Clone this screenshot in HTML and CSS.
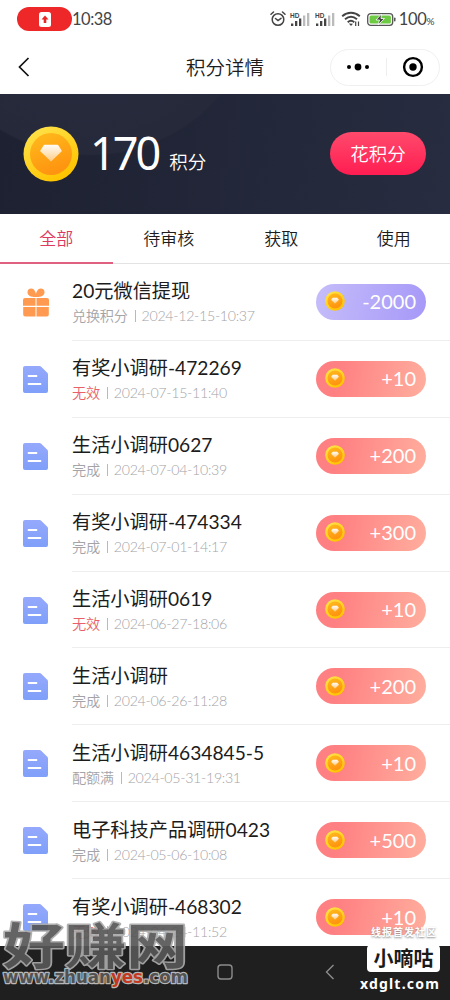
FILE: index.html
```html
<!DOCTYPE html>
<html lang="zh-CN">
<head>
  <meta charset="UTF-8" />
  <meta name="viewport" content="width=device-width, initial-scale=1.0" />
  <title>积分详情</title>
  <link rel="stylesheet" href="styles.css">
</head>
<body>

  <svg class="defs" width="0" height="0">
    <defs>
      <linearGradient id="coin-rim" x1="0" y1="0" x2="0.6" y2="1">
        <stop offset="0" stop-color="#ffe552" />
        <stop offset="1" stop-color="#ffc400" />
      </linearGradient>
      <linearGradient id="coin-face" x1="0" y1="0" x2="0.4" y2="1">
        <stop offset="0" stop-color="#ffbc1c" />
        <stop offset="1" stop-color="#ff9410" />
      </linearGradient>
      <linearGradient id="gem" x1="0" y1="0" x2="0" y2="1">
        <stop offset="0" stop-color="#fffaf2" />
        <stop offset="1" stop-color="#ffd08c" />
      </linearGradient>
      <linearGradient id="doc-fill" x1="0" y1="0" x2="0" y2="1">
        <stop offset="0" stop-color="#95a9fc" />
        <stop offset="1" stop-color="#7f9ff9" />
      </linearGradient>
    </defs>
    <symbol id="coin" viewBox="0 0 56 56">
      <circle cx="28" cy="28" r="27.5" fill="url(#coin-rim)" />
      <circle cx="28" cy="28" r="21" fill="url(#coin-face)" />
      <path d="M21.5 19.500h13l3.500 5.500L28 34.500 18 25z" fill="url(#gem)" stroke="url(#gem)" stroke-width="1.500" stroke-linejoin="round" />
    </symbol>
    <symbol id="doc" viewBox="0 0 25 27">
      <path d="M2 0h14.500q1 0 1.700.700l6.100 6.100q.700.700.700 1.700V25a2 2 0 0 1-2 2H2a2 2 0 0 1-2-2V2a2 2 0 0 1 2-2z" fill="url(#doc-fill)" />
      <path d="M5.500 10h8M5.500 18h12" stroke="#fff" stroke-width="1.800" stroke-linecap="round" />
    </symbol>
    <symbol id="gift" viewBox="0 0 26 29">
      <g fill="#ff9a50">
        <path d="M2 10h10.500v7.800H0V12a2 2 0 0 1 2-2zM13.500 10H24a2 2 0 0 1 2 2v5.800H13.500zM.200 19h12.300v9.500H2.200a2 2 0 0 1-2-2zM13.500 19h12.300v7.500a2 2 0 0 1-2 2H13.500z" />
        <path d="M12.500 9C8 9 4.500 7.500 4.500 4.200A3.800 3.800 0 0 1 8.300.500c2.800 0 4.700 3.500 4.700 6.500 0-3 1.900-6.500 4.700-6.500a3.800 3.800 0 0 1 3.800 3.700C21.500 7.500 18 9 13.500 9z" />
      </g>
    </symbol>
    <symbol id="signal" viewBox="0 0 21 15">
      <g fill="#444">
        <rect x="1" y="11.500" width="2.300" height="2.500" />
        <rect x="5" y="9" width="2.300" height="5" />
        <rect x="9" y="6.500" width="2.300" height="7.500" />
      </g>
      <rect x="13" y="3.500" width="2.300" height="10.500" fill="#bbb" />
      <rect x="17" y="1" width="2.300" height="13" fill="#bbb" />
      <text x="0" y="5.500" class="hd">HD</text>
    </symbol>
  </svg>

  <div class="status-bar">
    <span class="record">
      <svg width="12" height="15" viewBox="0 0 12 15">
        <rect width="12" height="15" rx="2.500" fill="#fff" />
        <path d="M6 3.500l3.500 4H7.300V11H4.700V7.500H2.500z" fill="#e82727" />
      </svg>
    </span>
    <span class="clock">10:38</span>
    <div class="status-icons">
      <svg class="alarm" width="16" height="16" viewBox="0 0 16 16" fill="none" stroke="#444" stroke-width="1.500" stroke-linecap="round">
        <circle cx="8" cy="8.500" r="5.800" />
        <path d="M5.500 7.500L8 9.600l3-2.300M1 3.300L3.500 1M15 3.300L12.500 1" />
      </svg>
      <svg width="21" height="15"><use href="#signal" /></svg>
      <svg class="second-signal" width="21" height="15"><use href="#signal" /></svg>
      <svg class="wifi" width="20" height="16" viewBox="0 0 20 16" fill="none" stroke="#444" stroke-width="1.900">
        <path d="M1.200 5.200C6.500.600 13.500.600 18.800 5.200M4 8.300c3.700-3.200 8.300-3.200 12 0M6.700 11.200c2-1.700 4.600-1.700 6.600 0" />
        <path d="M7.800 12.600L10 15l2-2.300z" fill="#444" stroke="none" />
        <path d="M14.700 10.500v4.500M17.500 10.500v4.500" stroke-width="1.200" />
      </svg>
      <svg class="battery" width="29" height="13" viewBox="0 0 29 13">
        <rect x=".700" y=".700" width="25" height="11.600" rx="3" fill="#fff" stroke="#555" stroke-width="1.300" />
        <rect x="2.500" y="2.500" width="21.400" height="8" rx="1.500" fill="#6cca43" />
        <path d="M14.500 1L9 7h3.500L11 12l6.500-6.500H14z" fill="#444" stroke="#fff" stroke-width=".800" />
        <rect x="27" y="4.500" width="1.500" height="4" rx=".700" fill="#555" />
      </svg>
      <span class="battery-level">100<small>%</small></span>
    </div>
  </div>

  <header class="nav-bar">
    <svg class="back" width="12" height="20" viewBox="0 0 12 20" fill="none" stroke="#111" stroke-width="1.700">
      <path d="M10.500 1L1.500 10l9 9" />
    </svg>
    <h1>积分详情</h1>
    <div class="capsule">
      <svg width="24" height="10" viewBox="0 0 24 10">
        <circle cx="3" cy="5" r="2" />
        <circle cx="12" cy="5" r="3.400" />
        <circle cx="21" cy="5" r="2" />
      </svg>
      <span class="capsule-line"></span>
      <svg width="22" height="22" viewBox="0 0 22 22">
        <circle cx="11" cy="11" r="8.900" fill="none" stroke="#000" stroke-width="2.400" />
        <circle cx="11" cy="11" r="3.700" />
      </svg>
    </div>
  </header>

  <section class="balance">
    <svg class="balance-coin" width="56" height="56"><use href="#coin" /></svg>
    <span class="balance-value">170</span>
    <span class="balance-unit">积分</span>
    <button class="spend-btn">花积分</button>
  </section>

  <nav class="tabs">
    <a class="tab active">全部</a>
    <a class="tab">待审核</a>
    <a class="tab">获取</a>
    <a class="tab">使用</a>
  </nav>

  <main class="records">
    <div class="record-row">
      <svg class="type-icon gift-icon" width="26" height="29"><use href="#gift" /></svg>
      <div class="record-body">
        <div class="record-text">
          <h2>20元微信提现</h2>
          <p>兑换积分<i></i>2024-12-15-10:37</p>
        </div>
        <div class="points minus"><svg width="20" height="20"><use href="#coin" /></svg>-2000</div>
      </div>
    </div>
    <div class="record-row">
      <svg class="type-icon" width="25" height="27"><use href="#doc" /></svg>
      <div class="record-body">
        <div class="record-text">
          <h2>有奖小调研-472269</h2>
          <p><span class="invalid">无效</span><i></i>2024-07-15-11:40</p>
        </div>
        <div class="points"><svg width="20" height="20"><use href="#coin" /></svg>+10</div>
      </div>
    </div>
    <div class="record-row">
      <svg class="type-icon" width="25" height="27"><use href="#doc" /></svg>
      <div class="record-body">
        <div class="record-text">
          <h2>生活小调研0627</h2>
          <p>完成<i></i>2024-07-04-10:39</p>
        </div>
        <div class="points"><svg width="20" height="20"><use href="#coin" /></svg>+200</div>
      </div>
    </div>
    <div class="record-row">
      <svg class="type-icon" width="25" height="27"><use href="#doc" /></svg>
      <div class="record-body">
        <div class="record-text">
          <h2>有奖小调研-474334</h2>
          <p>完成<i></i>2024-07-01-14:17</p>
        </div>
        <div class="points"><svg width="20" height="20"><use href="#coin" /></svg>+300</div>
      </div>
    </div>
    <div class="record-row">
      <svg class="type-icon" width="25" height="27"><use href="#doc" /></svg>
      <div class="record-body">
        <div class="record-text">
          <h2>生活小调研0619</h2>
          <p><span class="invalid">无效</span><i></i>2024-06-27-18:06</p>
        </div>
        <div class="points"><svg width="20" height="20"><use href="#coin" /></svg>+10</div>
      </div>
    </div>
    <div class="record-row">
      <svg class="type-icon" width="25" height="27"><use href="#doc" /></svg>
      <div class="record-body">
        <div class="record-text">
          <h2>生活小调研</h2>
          <p>完成<i></i>2024-06-26-11:28</p>
        </div>
        <div class="points"><svg width="20" height="20"><use href="#coin" /></svg>+200</div>
      </div>
    </div>
    <div class="record-row">
      <svg class="type-icon" width="25" height="27"><use href="#doc" /></svg>
      <div class="record-body">
        <div class="record-text">
          <h2>生活小调研4634845-5</h2>
          <p>配额满<i></i>2024-05-31-19:31</p>
        </div>
        <div class="points"><svg width="20" height="20"><use href="#coin" /></svg>+10</div>
      </div>
    </div>
    <div class="record-row">
      <svg class="type-icon" width="25" height="27"><use href="#doc" /></svg>
      <div class="record-body">
        <div class="record-text">
          <h2>电子科技产品调研0423</h2>
          <p>完成<i></i>2024-05-06-10:08</p>
        </div>
        <div class="points"><svg width="20" height="20"><use href="#coin" /></svg>+500</div>
      </div>
    </div>
    <div class="record-row">
      <svg class="type-icon" width="25" height="27"><use href="#doc" /></svg>
      <div class="record-body">
        <div class="record-text">
          <h2>有奖小调研-468302</h2>
          <p><span class="invalid">无效</span><i></i>2024-04-24-11:52</p>
        </div>
        <div class="points"><svg width="20" height="20"><use href="#coin" /></svg>+10</div>
      </div>
    </div>
  </main>

  <footer class="system-nav">
    <svg width="16" height="16" viewBox="0 0 16 16" fill="none" stroke="#8c8c8c" stroke-width="1.400">
      <rect x="1" y="1" width="14" height="14" rx="3" />
    </svg>
    <svg width="10" height="16" viewBox="0 0 10 16" fill="none" stroke="#8c8c8c" stroke-width="1.400">
      <path d="M8.500 1l-7 7 7 7" />
    </svg>
  </footer>

  <svg class="stamp-left" width="196" height="80" viewBox="0 0 196 80">
    <text class="stamp-name" x="3" y="57" textLength="185" lengthAdjust="spacingAndGlyphs" transform="scale(1 .83)">好赚网</text>
    <text class="stamp-url" x="3" y="66" textLength="185" lengthAdjust="spacingAndGlyphs">www.zhuan<tspan class="red">yes</tspan>.com</text>
  </svg>

  <div class="stamp-right">
    <span class="stamp-slogan">线报首发社区</span>
    <span class="stamp-badge">小嘀咕</span>
    <span class="stamp-site">xdglt.com</span>
  </div>

</body>
</html>
```
FILE: styles.css
```css
* {
  box-sizing: border-box;
}

body {
  margin: 0;
  position: relative;
  width: 450px;
  height: 1000px;
  overflow: hidden;
  display: flex;
  flex-direction: column;
  background: #fff;
  color: #1c1c1c;
  font-family: 'Noto Sans CJK SC', sans-serif;
  font-weight: 350;
}

svg {
  display: block;
  flex: none;
}

.defs {
  position: absolute;
}

/* status bar */
.status-bar {
  height: 40px;
  flex: none;
  display: flex;
  align-items: center;
  padding: 0 16px 2px 17px;
  color: #444;
  font-family: Lato, sans-serif;
  font-weight: 400;
}

.record {
  width: 55px;
  height: 24px;
  border-radius: 12px;
  background: #ee2729;
  display: flex;
  align-items: center;
  justify-content: center;
}

.clock {
  font-size: 16.500px;
  letter-spacing: -.5px;
}

.status-icons {
  margin-left: auto;
  display: flex;
  align-items: center;
}

.alarm {
  margin-right: 4px;
}

.second-signal {
  margin-left: 4px;
}

.wifi {
  margin: 0 6px 0 5px;
}

.battery {
  margin-right: 3px;
}

.battery-level {
  font-size: 16.500px;
  letter-spacing: -.4px;
}

.battery-level small {
  font-size: 10px;
}

.hd {
  font: bold 6.500px 'Liberation Sans', sans-serif;
  fill: #444;
}

/* title bar */
.nav-bar {
  height: 54px;
  flex: none;
  display: grid;
  grid-template-columns: 120px 1fr 120px;
  align-items: center;
  padding: 0 10px 0 18px;
}

.nav-bar h1 {
  margin: 0 8px 2px 0;
  text-align: center;
  font-size: 19.500px;
  font-weight: 350;
}

.capsule {
  width: 110px;
  height: 37px;
  margin-left: 10px;
  border: 1px solid #f0f0f0;
  border-radius: 19px;
  display: flex;
  align-items: center;
  justify-content: space-between;
  padding: 0 15px;
}

.capsule-line {
  width: 1px;
  height: 18px;
  background: #eee;
}

/* balance */
.balance {
  height: 120px;
  flex: none;
  display: flex;
  align-items: center;
  padding: 0 24px 1px 23px;
  color: #fff;
  background:
    radial-gradient(circle at 90px -110px, #292d3f 0, #25293a 170px, transparent 172px),
    linear-gradient(100deg, #1d2131, #272c40);
}

.balance-value {
  margin: 0 0 2px 11px;
  font-family: 'Noto Sans', sans-serif;
  font-size: 45px;
  line-height: 56px;
  letter-spacing: -3px;
  font-weight: 400;
}

.balance-unit {
  margin: 14px 0 0 11px;
  font-size: 18.500px;
}

.spend-btn {
  width: 96px;
  height: 43px;
  margin-left: auto;
  padding: 0 0 2px;
  border: 0;
  border-radius: 22px;
  background: linear-gradient(#ff4a6c, #ff1d51);
  color: #fff;
  font: inherit;
  font-size: 18.500px;
}

/* tabs */
.tabs {
  height: 50px;
  flex: none;
  display: grid;
  grid-template-columns: repeat(4, 1fr);
}

.tab {
  display: flex;
  align-items: center;
  justify-content: center;
  padding-bottom: 2px;
  border-bottom: 1px solid #e3e3e3;
  font-size: 17px;
}

.tab.active {
  padding-bottom: 1px;
  color: #dc3a60;
  border-bottom: 2px solid #e0607f;
}

/* list */
.records {
  flex: 1;
  min-height: 0;
  overflow: hidden;
}

.record-row {
  height: 76.900px;
  display: flex;
  align-items: center;
  padding-left: 23px;
}

.gift-icon {
  margin-right: -1px;
}

.record-body {
  flex: 1;
  height: 100%;
  margin-left: 24px;
  padding-right: 24px;
  display: flex;
  align-items: center;
  justify-content: space-between;
  border-bottom: 1px solid #eee;
}

.record-text {
  padding-top: 1px;
}

.record-text h2 {
  margin: 0;
  font-family: Lato, 'Noto Sans CJK SC', sans-serif;
  font-size: 19.200px;
  line-height: 27px;
  font-weight: 400;
}

.record-text p {
  margin: 1px 0 0;
  display: flex;
  align-items: center;
  font-family: Lato, 'Noto Sans CJK SC', sans-serif;
  font-size: 14.200px;
  letter-spacing: -.300px;
  line-height: 22px;
  color: #a4a4a8;
}

.record-text i {
  width: 1px;
  height: 12px;
  margin: 0 6px 0 7px;
  background: #b9b9bd;
}

.record-text .invalid {
  color: #ea6068;
}

.points {
  width: 110px;
  height: 36px;
  padding: 0 10px 1px 9px;
  border-radius: 18px;
  display: flex;
  align-items: center;
  justify-content: space-between;
  background: linear-gradient(100deg, #ff8082 20%, #ffae9e);
  color: #fff;
  font-family: Lato, 'Noto Sans CJK SC', sans-serif;
  font-size: 20px;
  font-weight: 400;
}

.points.minus {
  background: linear-gradient(100deg, #c5bdfa, #a698f8);
}

/* system navigation */
.system-nav {
  height: 54px;
  flex: none;
  display: flex;
  align-items: center;
  justify-content: space-between;
  padding: 0 115px 3px 217px;
  background: #1f1f1f;
}

/* stamps over the page */
.stamp-left {
  position: absolute;
  left: 0;
  top: 917px;
  opacity: .92;
}

.stamp-name,
.stamp-url {
  fill: #575757;
  stroke: #aaa;
  stroke-width: 3.500px;
  paint-order: stroke;
  stroke-linejoin: round;
}

.stamp-name {
  font: 700 59px 'Noto Sans CJK SC', sans-serif;
}

.stamp-url {
  font: bold 17px 'DejaVu Sans', sans-serif;
  stroke: #c4c4c4;
  stroke-width: 2.500px;
}

.stamp-url .red {
  fill: #d33a22;
}

.stamp-right {
  position: absolute;
  right: 10px;
  top: 924px;
  display: flex;
  flex-direction: column;
  align-items: flex-end;
  color: #fff;
  font-weight: 700;
}

.stamp-slogan {
  margin-right: 3px;
  font-size: 10px;
  line-height: 16px;
  letter-spacing: 1px;
  text-shadow: 0 1px 2px #888;
}

.stamp-badge {
  width: 73px;
  height: 27px;
  margin-top: 5px;
  border-radius: 4px;
  background: #fff;
  color: #1b1b1b;
  font-size: 20px;
  line-height: 26px;
  font-weight: 700;
  text-align: center;
}

.stamp-site {
  font-family: 'Noto Sans', sans-serif;
  font-size: 14px;
  line-height: 23px;
  letter-spacing: 1.200px;
}
```
